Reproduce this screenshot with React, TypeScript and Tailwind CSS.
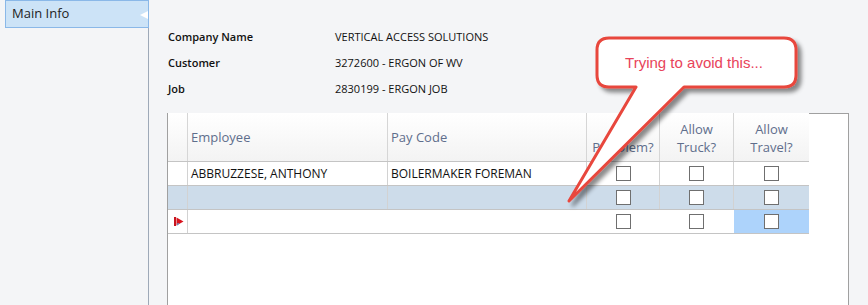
import React from "react";

const FONT = { fontFamily: '"Open Sans", "Noto Sans", sans-serif' };

function Check() {
  return <span className="block w-[15px] h-[15px] border border-[#6f6f6f] bg-white" />;
}

function Flag() {
  return (
    <svg width="10" height="9" viewBox="0 0 10 9">
      <rect x="0" y="0" width="2" height="9" fill="#c8141e" />
      <path d="M2.5 0.5 L9.5 4.5 L2.5 8.5 Z" fill="#d8141e" />
      <path d="M3 6.5 L5.5 6 L3.5 8.8 Z" fill="#5a9ad6" />
    </svg>
  );
}

const cols = ["w-[20px]", "w-[200px]", "w-[199px]", "w-[73px]", "w-[74px]", "w-[75px]"];

function Row({
  bg,
  marker,
  employee,
  payCode,
  lastBg,
  lines = true,
}: {
  bg: string;
  marker?: boolean;
  employee?: string;
  payCode?: string;
  lastBg?: string;
  lines?: boolean;
}) {
  const sep = lines ? "border-r border-[#d2d2d2]" : "border-r border-transparent";
  return (
    <div className={`flex h-[24px] border-b border-[#c4c4c4] ${bg}`}>
      <div className={`${cols[0]} shrink-0 border-r border-[#d2d2d2] flex items-center pl-[6px]`}>
        {marker && <Flag />}
      </div>
      <div className={`${cols[1]} shrink-0 ${sep} flex items-center pl-[3px] text-[12px] text-[#111]`}>
        {employee}
      </div>
      <div className={`${cols[2]} shrink-0 ${sep} flex items-center pl-[3px] text-[12px] text-[#111]`}>
        {payCode}
      </div>
      <div className={`${cols[3]} shrink-0 ${sep} flex items-center justify-center`}>
        <Check />
      </div>
      <div className={`${cols[4]} shrink-0 ${sep} flex items-center justify-center`}>
        <Check />
      </div>
      <div className={`${cols[5]} shrink-0 flex items-center justify-center ${lastBg ?? ""}`}>
        <Check />
      </div>
    </div>
  );
}

export default function App() {
  return (
    <div className="relative w-[868px] h-[305px] overflow-hidden bg-[#f4f5f7] flex" style={FONT}>
      {/* Left nav */}
      <div className="w-[149px] shrink-0 border-r border-[#9ea9b8] pl-[5px]">
        <div className="relative h-[28px] -mr-px bg-[#cce3f7] border border-[#8ab8e8] flex items-center pl-[6px] text-[13px] text-[#1e1e1e]">
          Main Info
          <span className="absolute right-0 top-[10px] w-0 h-0 border-y-[4px] border-y-transparent border-r-[8px] border-r-white" />
        </div>
      </div>

      {/* Content */}
      <div className="flex-1 flex flex-col pl-[18px] pr-[19px]">
        <div className="pt-[29px] flex flex-col gap-[10px] pl-px text-[11px] text-[#111]">
          <div className="flex h-[16px] items-center">
            <span className="w-[167px] font-semibold">Company Name</span>
            <span>VERTICAL ACCESS SOLUTIONS</span>
          </div>
          <div className="flex h-[16px] items-center">
            <span className="w-[167px] font-semibold">Customer</span>
            <span>3272600 - ERGON OF WV</span>
          </div>
          <div className="flex h-[16px] items-center">
            <span className="w-[167px] font-semibold">Job</span>
            <span>2830199 - ERGON JOB</span>
          </div>
        </div>

        {/* Grid box */}
        <div className="mt-[16px] flex-1 flex border-x border-[#a0a0a0] bg-white">
          <div className="w-[641px] shrink-0 flex flex-col">
            {/* Header */}
            <div className="flex h-[49px] border-b border-[#c4c4c4] bg-gradient-to-b from-white to-[#f3f3f3] text-[13px] text-[#5f6e8c]">
              <div className={`${cols[0]} shrink-0 border-r border-[#d6d6d6]`} />
              <div className={`${cols[1]} shrink-0 border-r border-[#d6d6d6] flex items-center pl-[3px] pt-[2px]`}>Employee</div>
              <div className={`${cols[2]} shrink-0 border-r border-[#d6d6d6] flex items-center pl-[3px] pt-[2px]`}>Pay Code</div>
              <div className={`${cols[3]} shrink-0 border-r border-[#d6d6d6] flex items-end justify-center text-center leading-[18px] pb-[5px]`}>Per Diem?</div>
              <div className={`${cols[4]} shrink-0 border-r border-[#d6d6d6] flex items-end justify-center text-center leading-[18px] pb-[5px]`}>
                Allow<br />Truck?
              </div>
              <div className={`${cols[5]} shrink-0 flex items-end justify-center text-center leading-[18px] pb-[5px]`}>
                Allow<br />Travel?
              </div>
            </div>
            <Row bg="bg-white" employee="ABBRUZZESE, ANTHONY" payCode="BOILERMAKER FOREMAN" />
            <Row bg="bg-[#cddcea]" />
            <Row bg="bg-white" marker lastBg="bg-[#add3fb]" lines={false} />
          </div>
          <div className="flex-1 border-t border-[#a0a0a0]" />
        </div>
      </div>

      {/* Callout */}
      <svg className="absolute left-0 top-0 pointer-events-none" width="868" height="305" viewBox="0 0 868 305">
        <defs>
          <filter id="sh" x="-20%" y="-20%" width="140%" height="140%">
            <feDropShadow dx="4" dy="4" stdDeviation="2" floodColor="#000" floodOpacity="0.45" />
          </filter>
        </defs>
        <path
          d="M609 38 H784 Q796 38 796 50 V75 Q796 87 784 87 H684 L569 201 L636 87 H609 Q597 87 597 75 V50 Q597 38 609 38 Z"
          fill="#fff"
          stroke="#e8463c"
          strokeWidth="3"
          strokeLinejoin="round"
          filter="url(#sh)"
        />
        <text
          x="694"
          y="68"
          textAnchor="middle"
          fontSize="15"
          fill="#e8435a"
          style={{ fontFamily: '"Liberation Sans", Arial, sans-serif' }}
        >
          Trying to avoid this...
        </text>
      </svg>
    </div>
  );
}
